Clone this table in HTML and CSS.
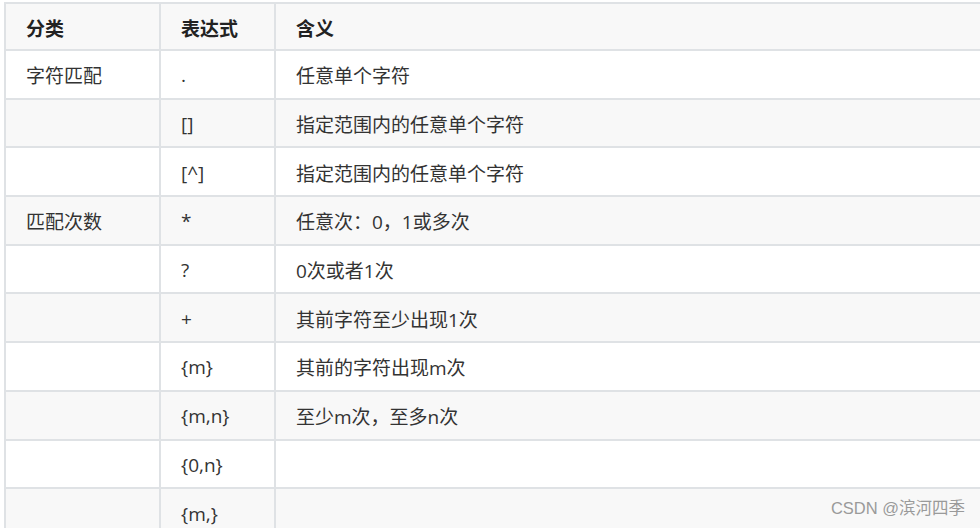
FILE: index.html
```html
<!DOCTYPE html>
<html lang="zh">
<head>
<meta charset="utf-8">
<link rel="stylesheet" href="styles.css">
</head>
<body>
<div class="page">
<table class="grid">
<thead>
<tr><th class="c1">分类</th><th class="c2">表达式</th><th class="c3">含义</th></tr>
</thead>
<tbody>
<tr><td>字符匹配</td><td>.</td><td>任意单个字符</td></tr>
<tr><td></td><td>[]</td><td>指定范围内的任意单个字符</td></tr>
<tr><td></td><td>[^]</td><td>指定范围内的任意单个字符</td></tr>
<tr><td>匹配次数</td><td>*</td><td>任意次：0，1或多次</td></tr>
<tr><td></td><td>?</td><td>0次或者1次</td></tr>
<tr><td></td><td>+</td><td>其前字符至少出现1次</td></tr>
<tr><td></td><td>{m}</td><td>其前的字符出现m次</td></tr>
<tr><td></td><td>{m,n}</td><td>至少m次，至多n次</td></tr>
<tr><td></td><td>{0,n}</td><td></td></tr>
<tr><td></td><td>{m,}</td><td></td></tr>
</tbody>
</table>
<div class="watermark">CSDN @滨河四季</div>
</div>
</body>
</html>
```

FILE: styles.css
```css
html, body {
  margin: 0;
  padding: 0;
  background: #ffffff;
  overflow: hidden;
}
.page {
  position: relative;
  width: 980px;
  height: 528px;
  overflow: hidden;
  padding: 2px 0 0 4px;
  box-sizing: border-box;
}
.grid {
  border-collapse: collapse;
  width: 1100px;
  table-layout: fixed;
  font-family: "Open Sans", "Noto Sans CJK SC", sans-serif;
  font-size: 19px;
  color: #333333;
}
.grid th, .grid td {
  border: 2px solid #dfe2e5;
  padding: 2px 20px 0;
  text-align: left;
  vertical-align: middle;
  white-space: nowrap;
}
.grid th {
  height: 43px;
  font-weight: bold;
  background: #f8f8f8;
  color: #222222;
}
.grid td {
  height: 44.7px;
}
.grid .c1 { width: 113px; }
.grid .c2 { width: 73px; }
.grid tbody tr:nth-child(2n) td {
  background: #f8f8f8;
}
.watermark {
  position: absolute;
  right: 15px;
  bottom: 9px;
  font-family: "Liberation Sans", "Noto Sans CJK SC", sans-serif;
  font-size: 16.5px;
  color: #9a9a9a;
}
```
